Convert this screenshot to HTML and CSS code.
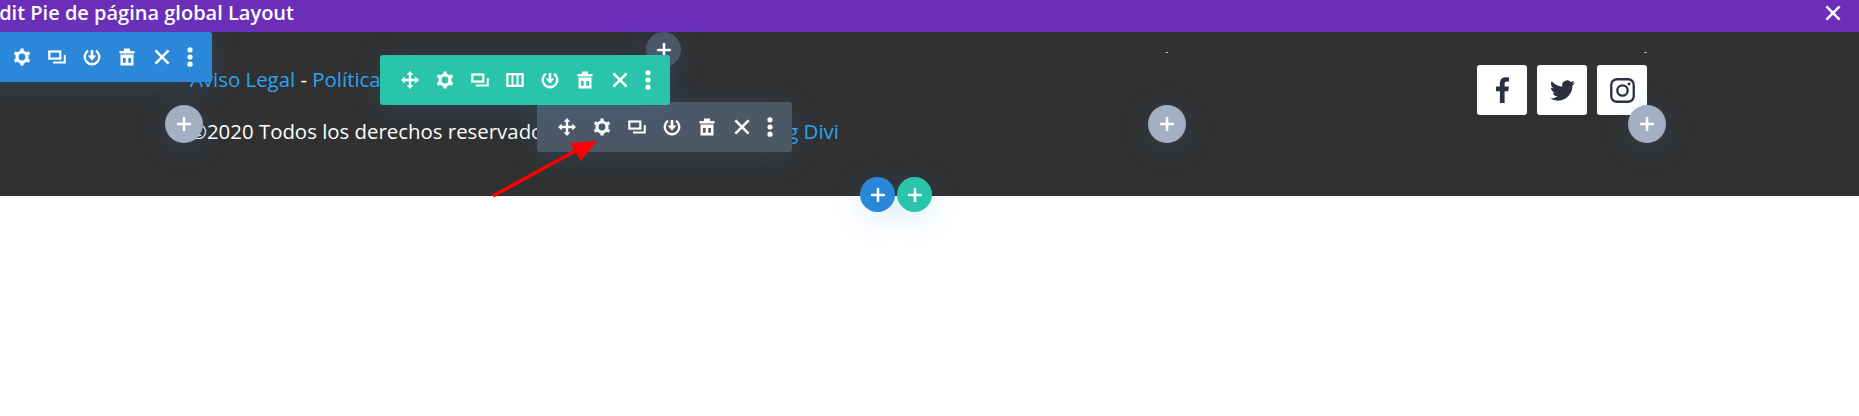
FILE: index.html
```html
<!DOCTYPE html>
<html lang="es">
<head>
  <meta charset="UTF-8" />
  <title>Edit Pie de página global Layout</title>
  <meta name="viewport" content="width=device-width, initial-scale=1.0" />
  <link rel="stylesheet" href="styles.css">
</head>
<body>
  <svg class="sprite" aria-hidden="true">
    <symbol id="i-move" viewBox="0 0 20 20">
      <path d="M3 10H17M10 3V17" fill="none" stroke="currentColor" stroke-width="2.400"/>
      <path d="M10 1L13.400 4.800H6.600ZM10 19L6.600 15.200H13.400ZM1 10L4.800 6.600V13.400ZM19 10L15.200 13.400V6.600Z" fill="currentColor"/>
    </symbol>
    <symbol id="i-gear" viewBox="0 0 20 20">
      <circle cx="10" cy="10" r="5" fill="none" stroke="currentColor" stroke-width="3.200"/>
      <path d="M10 1.400V4.500M10 15.500V18.600M2.550 5.700L5.200 7.250M14.800 12.750L17.450 14.300M2.550 14.300L5.200 12.750M14.800 7.250L17.450 5.700" fill="none" stroke="currentColor" stroke-width="3.200"/>
    </symbol>
    <symbol id="i-copy" viewBox="0 0 20 20">
      <rect x="2.300" y="4.500" width="11" height="7.100" fill="none" stroke="currentColor" stroke-width="2.200"/>
      <path d="M6 15.600H17.800V8" fill="none" stroke="currentColor" stroke-width="2"/>
    </symbol>
    <symbol id="i-cols" viewBox="0 0 20 20">
      <rect x="2.400" y="4.100" width="15.200" height="11.800" fill="none" stroke="currentColor" stroke-width="2.200"/>
      <path d="M7.500 4V16M12.500 4V16" fill="none" stroke="currentColor" stroke-width="2"/>
    </symbol>
    <symbol id="i-save" viewBox="0 0 20 20">
      <path d="M6 3.800A7.300 7.300 0 1 0 14 3.800" fill="none" stroke="currentColor" stroke-width="2.400"/>
      <path d="M8.700 3H11.300V8.500H14.300L10 13.800L5.700 8.500H8.700Z" fill="currentColor"/>
    </symbol>
    <symbol id="i-trash" viewBox="0 0 20 20">
      <path d="M7 1.500H13V4H17.500V6.500H2.500V4H7Z" fill="currentColor"/>
      <path fill-rule="evenodd" d="M3.500 7.500H16.500V18.500H3.500ZM6 11V15.800H8.700V11ZM11.300 11V15.800H14V11Z" fill="currentColor"/>
    </symbol>
    <symbol id="i-close" viewBox="0 0 20 20">
      <path d="M3.400 3.400L16.600 16.600M16.600 3.400L3.400 16.600" fill="none" stroke="currentColor" stroke-width="2.600"/>
    </symbol>
    <symbol id="i-dots" viewBox="0 0 20 20">
      <circle cx="10" cy="2.800" r="2.600" fill="currentColor"/>
      <circle cx="10" cy="10" r="2.600" fill="currentColor"/>
      <circle cx="10" cy="17.200" r="2.600" fill="currentColor"/>
    </symbol>
    <symbol id="i-plus" viewBox="0 0 14 14">
      <path d="M7 1V13M1 7H13" fill="none" stroke="currentColor" stroke-width="2.600" stroke-linecap="round"/>
    </symbol>
  </svg>

  <header class="topbar">
    <h1 class="topbar-title">Edit Pie de página global Layout</h1>
    <svg class="topbar-close"><use href="#i-close"/></svg>
  </header>

  <footer class="footer">
    <div class="col col-text">
      <p><a href="#">Aviso Legal</a> - <a href="#">Política de Privacidad</a></p>
      <p>©2020 Todos los derechos reservados | Diseño web, por el <a href="#">Blog Divi</a></p>
      <button class="add add-gray add-col1"><svg><use href="#i-plus"/></svg></button>
    </div>
    <div class="col col-mid">
      <span class="dash">-</span>
      <button class="add add-gray add-mid"><svg><use href="#i-plus"/></svg></button>
    </div>
    <div class="col col-social">
      <span class="dash dash-social">-</span>
      <div class="social">
        <a class="social-btn" href="#">
          <svg class="ic-fb" viewBox="0 0 13 26"><path d="M8.600 26V14.200H12.200L12.800 9.600H8.600V6.900C8.600 5.600 9 4.600 10.800 4.600H13V.400C12.600.300 11.300.200 9.800.200 6.600.200 3.900 2.200 3.900 6.300V9.600H0V14.200H3.900V26Z"/></svg>
        </a>
        <a class="social-btn" href="#">
          <svg class="ic-tw" viewBox="0 0 24 24"><path d="M23.953 4.570a10 10 0 01-2.825.775 4.958 4.958 0 002.163-2.723c-.951.555-2.005.959-3.127 1.184a4.920 4.920 0 00-8.384 4.482C7.690 8.095 4.067 6.130 1.640 3.162a4.822 4.822 0 00-.666 2.475c0 1.710.870 3.213 2.188 4.096a4.904 4.904 0 01-2.228-.616v.060a4.923 4.923 0 003.946 4.827 4.996 4.996 0 01-2.212.085 4.936 4.936 0 004.604 3.417 9.867 9.867 0 01-6.102 2.105c-.390 0-.779-.023-1.170-.067a13.995 13.995 0 007.557 2.209c9.053 0 13.998-7.496 13.998-13.985 0-.210 0-.420-.015-.630A9.935 9.935 0 0024 4.590z"/></svg>
        </a>
        <a class="social-btn" href="#">
          <svg class="ic-ig" viewBox="0 0 24 24">
            <rect x="1.200" y="1.200" width="21.600" height="21.600" rx="5.500" fill="none" stroke="currentColor" stroke-width="2.200"/>
            <circle cx="12" cy="12" r="5" fill="none" stroke="currentColor" stroke-width="2.200"/>
            <circle cx="18.300" cy="5.700" r="1.400" fill="currentColor"/>
          </svg>
        </a>
      </div>
      <button class="add add-gray add-social"><svg><use href="#i-plus"/></svg></button>
    </div>

    <button class="add add-slate add-top"><svg><use href="#i-plus"/></svg></button>

    <div class="toolbar toolbar-slate">
      <span class="tool"><svg><use href="#i-move"/></svg></span>
      <span class="tool"><svg><use href="#i-gear"/></svg></span>
      <span class="tool"><svg><use href="#i-copy"/></svg></span>
      <span class="tool"><svg><use href="#i-save"/></svg></span>
      <span class="tool"><svg><use href="#i-trash"/></svg></span>
      <span class="tool"><svg><use href="#i-close"/></svg></span>
      <span class="tool tool-dots"><svg><use href="#i-dots"/></svg></span>
    </div>

    <div class="toolbar toolbar-green">
      <span class="tool"><svg><use href="#i-move"/></svg></span>
      <span class="tool"><svg><use href="#i-gear"/></svg></span>
      <span class="tool"><svg><use href="#i-copy"/></svg></span>
      <span class="tool"><svg><use href="#i-cols"/></svg></span>
      <span class="tool"><svg><use href="#i-save"/></svg></span>
      <span class="tool"><svg><use href="#i-trash"/></svg></span>
      <span class="tool"><svg><use href="#i-close"/></svg></span>
      <span class="tool tool-dots"><svg><use href="#i-dots"/></svg></span>
    </div>

    <div class="toolbar toolbar-blue">
      <span class="tool"><svg><use href="#i-move"/></svg></span>
      <span class="tool"><svg><use href="#i-gear"/></svg></span>
      <span class="tool"><svg><use href="#i-copy"/></svg></span>
      <span class="tool"><svg><use href="#i-save"/></svg></span>
      <span class="tool"><svg><use href="#i-trash"/></svg></span>
      <span class="tool"><svg><use href="#i-close"/></svg></span>
      <span class="tool tool-dots"><svg><use href="#i-dots"/></svg></span>
    </div>

    <button class="add add-blue add-section"><svg><use href="#i-plus"/></svg></button>
    <button class="add add-green add-row"><svg><use href="#i-plus"/></svg></button>

    <!-- flecha roja de la captura -->
    <svg class="arrow" viewBox="0 0 110 64">
      <path d="M2 60L88 13" fill="none" stroke="#f00" stroke-width="3.400"/>
      <path d="M106 5L79 7L90 25Z" fill="#f00"/>
    </svg>
  </footer>
</body>
</html>
```

FILE: styles.css
```css
* {
  box-sizing: border-box;
}

body {
  margin: 0;
  height: 416px;
  overflow: hidden;
  background: #fff;
  color: #fff;
  font-family: "Open Sans", sans-serif;
}

.sprite {
  display: none;
}

/* barra morada */
.topbar {
  height: 32px;
  background: #6c2eb9;
  display: flex;
  justify-content: space-between;
  padding-right: 16px;
}

.topbar-title {
  margin: 0 0 0 -12px;
  font-size: 20px;
  font-weight: 600;
  line-height: 26px;
}

.topbar-close {
  width: 20px;
  height: 20px;
  margin-top: 3px;
}

/* pie de pagina */
.footer {
  position: relative;
  height: 164px;
  background: #313131;
  display: flex;
  padding-left: 190px;
  font-size: 20.4px;
}

.footer a {
  color: #2ea3f2;
  text-decoration: none;
}

.col {
  position: relative;
}

.col-text {
  width: 667px;
  padding-top: 32px;
}

.col-text p {
  margin: 0 0 22px;
  line-height: 30px;
  white-space: nowrap;
}

.col-mid {
  width: 620px;
  text-align: center;
}

.col-social {
  width: 170px;
}

.dash {
  display: block;
  font-size: 9px;
  line-height: 12px;
  padding-top: 14px;
}

.dash-social {
  text-align: right;
}

.social {
  display: flex;
  gap: 10px;
  margin-top: 7px;
}

.social-btn {
  width: 50px;
  height: 50px;
  background: #fff;
  border-radius: 3px;
  display: flex;
  align-items: center;
  justify-content: center;
}

.footer .social-btn {
  color: #2a3042;
}

.social-btn svg {
  fill: currentColor;
}

.ic-fb {
  width: 13px;
  height: 26px;
}

.ic-tw,
.ic-ig {
  width: 25px;
  height: 25px;
}

/* botones + */
.add {
  position: absolute;
  border: 0;
  padding: 0;
  border-radius: 50%;
  color: #fff;
  display: flex;
  align-items: center;
  justify-content: center;
  box-shadow: 0 5px 30px rgba(43, 135, 218, 0.2);
}

.add svg {
  width: 14px;
  height: 14px;
}

.add-gray {
  width: 38px;
  height: 38px;
  background: #a3b0c2;
  top: 73px;
}

.add-col1 {
  left: -25px;
}

.add-mid {
  left: 50%;
  margin-left: -19px;
}

.add-social {
  right: -19px;
}

.add-slate {
  width: 35px;
  height: 35px;
  background: #4c5866;
  top: 0;
  left: 646px;
}

.add-blue,
.add-green {
  width: 35px;
  height: 35px;
  top: 145px;
}

.add-blue {
  background: #2b87da;
  left: 860px;
}

.add-green {
  background: #29c4a9;
  left: 897px;
}

/* barras de herramientas */
.toolbar {
  position: absolute;
  height: 50px;
  padding: 0 12.5px;
  border-radius: 3px;
  display: flex;
  align-items: center;
  box-shadow: 0 5px 30px rgba(43, 135, 218, 0.2);
}

.tool {
  width: 35px;
  display: flex;
  justify-content: center;
}

.tool svg {
  width: 20px;
  height: 20px;
  display: block;
}

.tool-dots {
  width: 20px;
}

.toolbar-blue {
  background: #2b87da;
  left: -43px;
  top: 0;
}

.toolbar-green {
  background: #29c4a9;
  left: 380px;
  top: 23px;
}

.toolbar-slate {
  background: #4c5866;
  left: 537px;
  top: 70px;
}

.arrow {
  position: absolute;
  left: 491px;
  top: 104px;
  width: 110px;
  height: 64px;
}
```
